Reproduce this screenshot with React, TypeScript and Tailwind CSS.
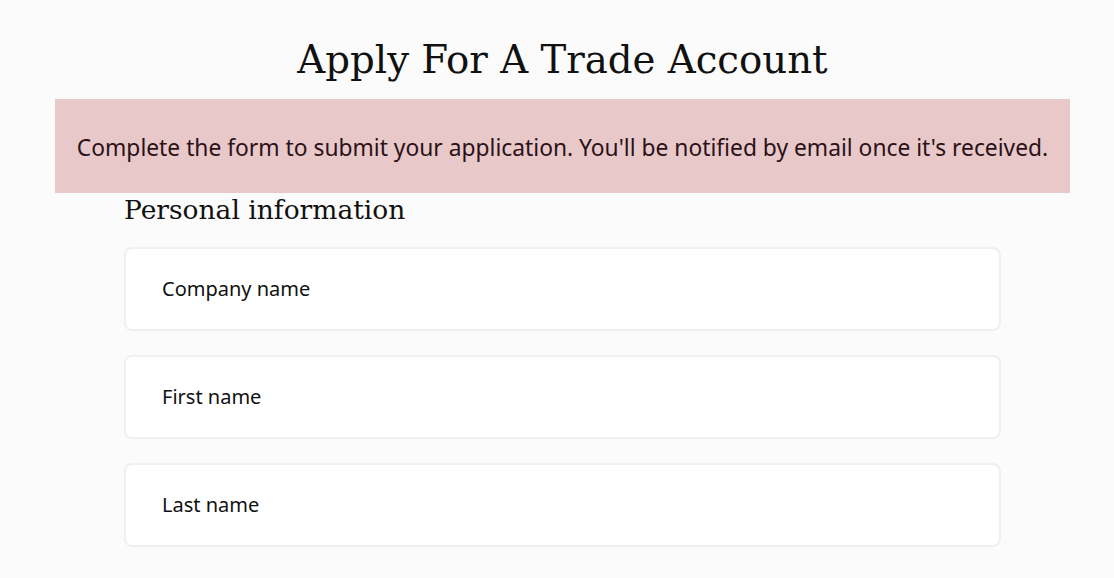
import React from "react";

const fields = ["Company name", "First name", "Last name"];

const App = () => {
  return (
    <div className="min-h-[578px] w-full bg-[#fcfbfb] text-black">
      <div className="ml-[55px] w-[1015px] pt-[36px]">
        <h1 className="text-center text-[38.7px] leading-[48px] text-[#111] [font-family:'DejaVu_Serif',serif]">
          Apply For A Trade Account
        </h1>

        <div className="mt-[15px] flex h-[94px] items-center justify-center bg-[#e8c8c9] pt-[5px]">
          <p className="text-[22.8px] text-[#2a1218] [font-family:'Noto_Sans',sans-serif]">
            Complete the form to submit your application. You'll be notified by email once it's received.
          </p>
        </div>

        <div className="mx-[69px] mt-[1px]">
          <h2 className="text-[26.5px] leading-[32px] text-[#111] [font-family:'DejaVu_Serif',serif]">
            Personal information
          </h2>

          <div className="mt-[21px] flex flex-col gap-[24px]">
            {fields.map((label) => (
              <div
                key={label}
                className="flex h-[84px] items-center rounded-lg border-2 border-[#f4eeee] bg-white pl-[36px]"
              >
                <span className="text-[20px] text-[#111] [font-family:'Noto_Sans',sans-serif]">
                  {label}
                </span>
              </div>
            ))}
          </div>
        </div>
      </div>
    </div>
  );
};

export default App;
